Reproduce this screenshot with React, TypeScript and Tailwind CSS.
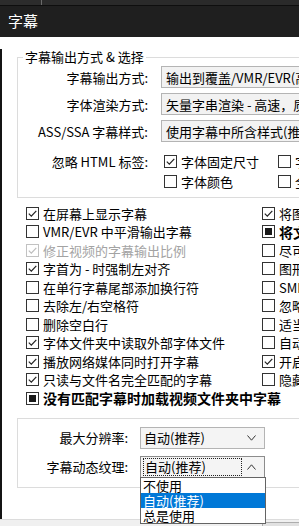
import React from "react";

type Mark = "on" | "off" | "mixed" | "dim";

const FONT = "font-['Noto_Sans_CJK_SC','Noto_Sans',sans-serif]";

function Box({ mark }: { mark: Mark }) {
  const dim = mark === "dim";
  return (
    <span
      className={`flex h-[13px] w-[13px] shrink-0 items-center justify-center border bg-white ${
        dim ? "border-[#c2c2c2]" : "border-[#333333]"
      }`}
    >
      {mark === "on" || dim ? (
        <svg width="11" height="11" viewBox="0 0 11 11">
          <polyline
            points="1.8,5.6 4.3,8.1 9.3,2.8"
            fill="none"
            stroke={dim ? "#bdbdbd" : "#222222"}
            strokeWidth="1.2"
          />
        </svg>
      ) : null}
      {mark === "mixed" ? <span className="h-[7px] w-[7px] bg-[#1a1a1a]" /> : null}
    </span>
  );
}

function Check({
  label,
  mark,
  bold,
  h = "h-[18.5px]",
}: {
  label: string;
  mark: Mark;
  bold?: boolean;
  h?: string;
}) {
  return (
    <div className={`flex ${h} items-center gap-[4px] whitespace-nowrap`}>
      <Box mark={mark} />
      <span
        className={`${bold ? "text-[14px] font-bold" : "text-[13px]"} leading-none ${
          mark === "dim" ? "text-[#a3a3a3]" : "text-black"
        }`}
      >
        {label}
      </span>
    </div>
  );
}

function Chevron({ up }: { up?: boolean }) {
  return (
    <svg width="9" height="6" viewBox="0 0 9 6" className="shrink-0">
      <polyline
        points={up ? "0.5,5.5 4.5,0.8 8.5,5.5" : "0.5,0.5 4.5,5.2 8.5,0.5"}
        fill="none"
        stroke="#333333"
        strokeWidth="1"
      />
    </svg>
  );
}

function Combo({ value }: { value: string }) {
  return (
    <div className="flex h-[22px] w-[240px] items-center border border-[#b4b4b4] bg-[#f2f2f2] pl-[4px] text-[13px] leading-none whitespace-nowrap overflow-hidden">
      {value}
    </div>
  );
}

const leftChecks: { label: string; mark: Mark; bold?: boolean }[] = [
  { label: "在屏幕上显示字幕", mark: "on" },
  { label: "VMR/EVR 中平滑输出字幕", mark: "off" },
  { label: "修正视频的字幕输出比例", mark: "dim" },
  { label: "字首为 - 时强制左对齐", mark: "on" },
  { label: "在单行字幕尾部添加换行符", mark: "off" },
  { label: "去除左/右空格符", mark: "off" },
  { label: "删除空白行", mark: "off" },
  { label: "字体文件夹中读取外部字体文件", mark: "on" },
  { label: "播放网络媒体同时打开字幕", mark: "on" },
  { label: "只读与文件名完全匹配的字幕", mark: "on" },
  { label: "没有匹配字幕时加载视频文件夹中字幕", mark: "mixed", bold: true },
];

const rightChecks: { label: string; mark: Mark; bold?: boolean }[] = [
  { label: "将图形字幕转为文本", mark: "on" },
  { label: "将文本字幕渲染", mark: "mixed", bold: true },
  { label: "尽可能使用内嵌字幕", mark: "off" },
  { label: "图形字幕使用原始尺寸", mark: "off" },
  { label: "SMI 字幕使用语言", mark: "off" },
  { label: "忽略字幕中的位置", mark: "off" },
  { label: "适当调整字幕位置", mark: "off" },
  { label: "自动加载字幕", mark: "off" },
  { label: "开启字幕同步", mark: "on" },
  { label: "隐藏字幕", mark: "off" },
];

export default function App() {
  return (
    <div className={`relative h-[526px] w-[299px] overflow-hidden bg-white ${FONT}`}>
      {/* window behind */}
      <div className="flex h-[5px]">
        <div className="w-[42px] border-r border-[#6a6a6a] bg-[#2c2c2c]" />
        <div className="flex-1 bg-[#2a2a2a]" />
      </div>

      {/* title bar */}
      <div className="flex h-[32px] items-center border-t border-[#0e0e0e] bg-[#1f1f1f] pl-[8px] text-[15px] text-white">
        字幕
      </div>

      {/* body */}
      <div className="h-[470px] w-[420px] border-l-2 border-[#141414] bg-white text-black">
        <fieldset className="ml-[15px] mt-[12px] w-[400px] border border-[#dcdcdc] pb-[6px] pl-[5px]">
          <legend className="px-[2px] text-[13px] leading-[16px]">字幕输出方式 &amp; 选择</legend>

          <div className="flex flex-col gap-[5px] pt-[1px]">
            <div className="flex items-center gap-[13px]">
              <div className="w-[125px] text-right text-[13px] leading-none">字幕输出方式:</div>
              <Combo value="输出到覆盖/VMR/EVR(高质量)" />
            </div>
            <div className="flex items-center gap-[13px]">
              <div className="w-[125px] text-right text-[13px] leading-none">字体渲染方式:</div>
              <Combo value="矢量字串渲染 - 高速，质量一般" />
            </div>
            <div className="flex items-center gap-[13px]">
              <div className="w-[125px] text-right text-[13px] leading-none">ASS/SSA 字幕样式:</div>
              <Combo value="使用字幕中所含样式(推荐)" />
            </div>
          </div>

          <div className="mt-[9px] flex items-start gap-[13px]">
            <div className="flex h-[20px] w-[125px] items-center justify-end text-[13px] leading-none">
              忽略 HTML 标签:
            </div>
            <div className="grid grid-cols-[114px_114px] pl-[3px]">
              <Check label="字体固定尺寸" mark="on" h="h-[20px]" />
              <Check label="字体样式" mark="off" h="h-[20px]" />
              <Check label="字体颜色" mark="off" h="h-[20px]" />
              <Check label="全部标签" mark="off" h="h-[20px]" />
            </div>
          </div>
        </fieldset>

        <div className="mt-[6px] flex pl-[24px]">
          <div className="flex w-[236px] flex-col">
            {leftChecks.map((c) => (
              <Check key={c.label} label={c.label} mark={c.mark} bold={c.bold} />
            ))}
          </div>
          <div className="flex flex-col">
            {rightChecks.map((c) => (
              <Check key={c.label} label={c.label} mark={c.mark} bold={c.bold} />
            ))}
          </div>
        </div>

        <fieldset className="ml-[15px] mt-[10px] w-[400px] border border-[#dcdcdc] px-[7px] pb-[9px] pt-[8px]">
          <div className="flex flex-col gap-[7px]">
            <div className="flex items-center gap-[12px]">
              <div className="w-[103px] text-right text-[13px] leading-none">最大分辨率:</div>
              <div className="flex h-[22px] w-[125px] items-center justify-between border border-[#b4b4b4] bg-[#f4f4f4] pl-[3px] pr-[8px] text-[13px] leading-none">
                <span>自动(推荐)</span>
                <Chevron />
              </div>
            </div>
            <div className="flex items-center gap-[12px]">
              <div className="w-[103px] text-right text-[13px] leading-none">字幕动态纹理:</div>
              <div className="relative flex h-[22px] w-[125px] items-center justify-between border border-[#8c8c8c] bg-[#f4f4f4] pl-[2px] pr-[8px] text-[13px] leading-none">
                <span className="flex h-[18px] w-[99px] items-center border border-dotted border-[#222222] pl-[1px]">
                  自动(推荐)
                </span>
                <Chevron up />
                <div className="absolute left-[-1px] top-full z-10 w-[126px] border border-[#646464] bg-white text-[13px] leading-none">
                  <div className="flex h-[15px] items-center pl-[2px]">不使用</div>
                  <div className="flex h-[15px] items-center bg-[#0078d7] pl-[2px] text-white">自动(推荐)</div>
                  <div className="flex h-[15px] items-center pl-[2px]">总是使用</div>
                </div>
              </div>
            </div>
          </div>
        </fieldset>
      </div>

      {/* footer */}
      <div className="flex h-[19px] border-t border-[#dcdcdc] bg-[#f0f0f0] pl-[262px] pt-[2px]">
        <div className="flex h-[24px] w-[75px] shrink-0 items-start border border-[#adadad] bg-[#e1e1e1] pl-[4px] pt-[3px] text-[13px] leading-none whitespace-nowrap">
          取消(C)
        </div>
      </div>
    </div>
  );
}
